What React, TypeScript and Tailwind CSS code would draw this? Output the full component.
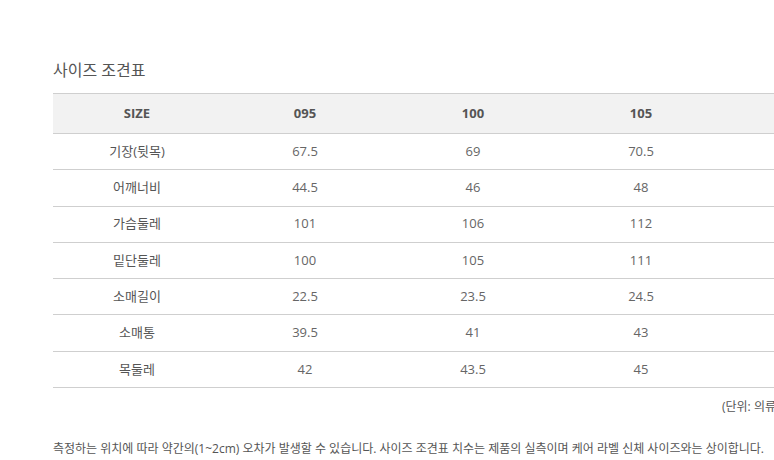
import React from "react";

const cols = ["095", "100", "105"];
const rows: [string, string[]][] = [
  ["기장(뒷목)", ["67.5", "69", "70.5"]],
  ["어깨너비", ["44.5", "46", "48"]],
  ["가슴둘레", ["101", "106", "112"]],
  ["밑단둘레", ["100", "105", "111"]],
  ["소매길이", ["22.5", "23.5", "24.5"]],
  ["소매통", ["39.5", "41", "43"]],
  ["목둘레", ["42", "43.5", "45"]],
];

const font = { fontFamily: '"Open Sans", "Noto Sans CJK KR", sans-serif' };

export default function App() {
  return (
    <div className="w-[774px] h-[460px] overflow-hidden bg-white" style={font}>
      <div className="w-[840px] ml-[53px] pt-[58px]">
        <div className="text-[16px] leading-[24px] text-[#555]">사이즈 조견표</div>
        <div className="mt-[11px] border-t border-[#cfcfcf]">
          <div className="flex h-[40px] bg-[#f2f2f2] border-b border-[#cfcfcf] text-[13px] font-bold text-[#555]">
            <div className="w-[168px] flex items-center justify-center">SIZE</div>
            {cols.map((c) => (
              <div key={c} className="w-[168px] flex items-center justify-center">{c}</div>
            ))}
          </div>
          {rows.map(([label, vals]) => (
            <div key={label} className="flex h-[36.3px] border-b border-[#cfcfcf] text-[13px] text-[#666]">
              <div className="w-[168px] flex items-center justify-center text-[#555]">{label}</div>
              {vals.map((v, i) => (
                <div key={i} className="w-[168px] flex items-center justify-center">{v}</div>
              ))}
            </div>
          ))}
        </div>
        <div className="mt-[10px] pl-[669px] text-[12px] text-[#555] whitespace-nowrap">(단위: 의류 - cm)</div>
        <div className="mt-[24px] text-[12px] text-[#555] whitespace-nowrap">
          측정하는 위치에 따라 약간의(1~2cm) 오차가 발생할 수 있습니다. 사이즈 조견표 치수는 제품의 실측이며 케어 라벨 신체 사이즈와는 상이합니다.
        </div>
      </div>
    </div>
  );
}
